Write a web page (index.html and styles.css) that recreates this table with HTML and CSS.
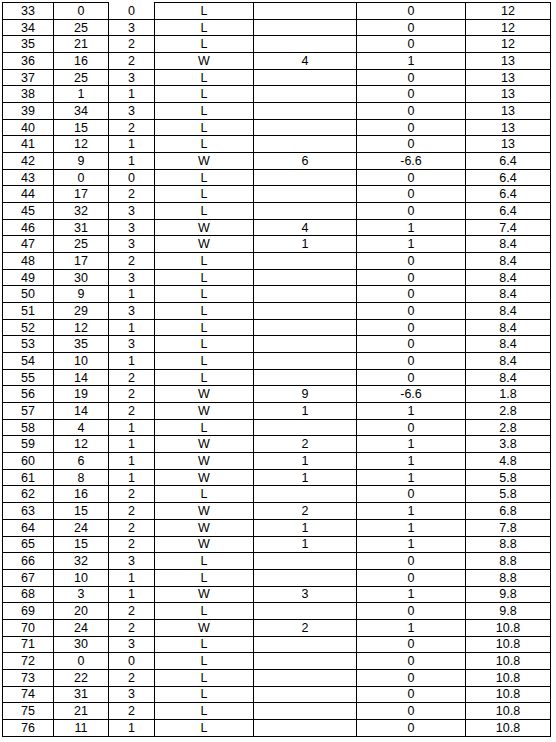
FILE: index.html
```html
<!DOCTYPE html>
<html>
<head>
<meta charset="utf-8">
<link rel="stylesheet" href="styles.css">
</head>
<body>
<table class="grid">
<colgroup>
<col class="c1"><col class="c2"><col class="c3"><col class="c4"><col class="c5"><col class="c6"><col class="c7">
</colgroup>
<tbody>
<tr class="first"><td>33</td><td>0</td><td class="open">0</td><td>L</td><td></td><td>0</td><td>12</td></tr>
<tr><td>34</td><td>25</td><td>3</td><td>L</td><td></td><td>0</td><td>12</td></tr>
<tr><td>35</td><td>21</td><td>2</td><td>L</td><td></td><td>0</td><td>12</td></tr>
<tr><td>36</td><td>16</td><td>2</td><td>W</td><td>4</td><td>1</td><td>13</td></tr>
<tr><td>37</td><td>25</td><td>3</td><td>L</td><td></td><td>0</td><td>13</td></tr>
<tr><td>38</td><td>1</td><td>1</td><td>L</td><td></td><td>0</td><td>13</td></tr>
<tr><td>39</td><td>34</td><td>3</td><td>L</td><td></td><td>0</td><td>13</td></tr>
<tr><td>40</td><td>15</td><td>2</td><td>L</td><td></td><td>0</td><td>13</td></tr>
<tr><td>41</td><td>12</td><td>1</td><td>L</td><td></td><td>0</td><td>13</td></tr>
<tr><td>42</td><td>9</td><td>1</td><td>W</td><td>6</td><td>-6.6</td><td>6.4</td></tr>
<tr><td>43</td><td>0</td><td>0</td><td>L</td><td></td><td>0</td><td>6.4</td></tr>
<tr><td>44</td><td>17</td><td>2</td><td>L</td><td></td><td>0</td><td>6.4</td></tr>
<tr><td>45</td><td>32</td><td>3</td><td>L</td><td></td><td>0</td><td>6.4</td></tr>
<tr><td>46</td><td>31</td><td>3</td><td>W</td><td>4</td><td>1</td><td>7.4</td></tr>
<tr><td>47</td><td>25</td><td>3</td><td>W</td><td>1</td><td>1</td><td>8.4</td></tr>
<tr><td>48</td><td>17</td><td>2</td><td>L</td><td></td><td>0</td><td>8.4</td></tr>
<tr><td>49</td><td>30</td><td>3</td><td>L</td><td></td><td>0</td><td>8.4</td></tr>
<tr><td>50</td><td>9</td><td>1</td><td>L</td><td></td><td>0</td><td>8.4</td></tr>
<tr><td>51</td><td>29</td><td>3</td><td>L</td><td></td><td>0</td><td>8.4</td></tr>
<tr><td>52</td><td>12</td><td>1</td><td>L</td><td></td><td>0</td><td>8.4</td></tr>
<tr><td>53</td><td>35</td><td>3</td><td>L</td><td></td><td>0</td><td>8.4</td></tr>
<tr><td>54</td><td>10</td><td>1</td><td>L</td><td></td><td>0</td><td>8.4</td></tr>
<tr><td>55</td><td>14</td><td>2</td><td>L</td><td></td><td>0</td><td>8.4</td></tr>
<tr><td>56</td><td>19</td><td>2</td><td>W</td><td>9</td><td>-6.6</td><td>1.8</td></tr>
<tr><td>57</td><td>14</td><td>2</td><td>W</td><td>1</td><td>1</td><td>2.8</td></tr>
<tr><td>58</td><td>4</td><td>1</td><td>L</td><td></td><td>0</td><td>2.8</td></tr>
<tr><td>59</td><td>12</td><td>1</td><td>W</td><td>2</td><td>1</td><td>3.8</td></tr>
<tr><td>60</td><td>6</td><td>1</td><td>W</td><td>1</td><td>1</td><td>4.8</td></tr>
<tr><td>61</td><td>8</td><td>1</td><td>W</td><td>1</td><td>1</td><td>5.8</td></tr>
<tr><td>62</td><td>16</td><td>2</td><td>L</td><td></td><td>0</td><td>5.8</td></tr>
<tr><td>63</td><td>15</td><td>2</td><td>W</td><td>2</td><td>1</td><td>6.8</td></tr>
<tr><td>64</td><td>24</td><td>2</td><td>W</td><td>1</td><td>1</td><td>7.8</td></tr>
<tr><td>65</td><td>15</td><td>2</td><td>W</td><td>1</td><td>1</td><td>8.8</td></tr>
<tr><td>66</td><td>32</td><td>3</td><td>L</td><td></td><td>0</td><td>8.8</td></tr>
<tr><td>67</td><td>10</td><td>1</td><td>L</td><td></td><td>0</td><td>8.8</td></tr>
<tr><td>68</td><td>3</td><td>1</td><td>W</td><td>3</td><td>1</td><td>9.8</td></tr>
<tr><td>69</td><td>20</td><td>2</td><td>L</td><td></td><td>0</td><td>9.8</td></tr>
<tr><td>70</td><td>24</td><td>2</td><td>W</td><td>2</td><td>1</td><td>10.8</td></tr>
<tr><td>71</td><td>30</td><td>3</td><td>L</td><td></td><td>0</td><td>10.8</td></tr>
<tr><td>72</td><td>0</td><td>0</td><td>L</td><td></td><td>0</td><td>10.8</td></tr>
<tr><td>73</td><td>22</td><td>2</td><td>L</td><td></td><td>0</td><td>10.8</td></tr>
<tr><td>74</td><td>31</td><td>3</td><td>L</td><td></td><td>0</td><td>10.8</td></tr>
<tr><td>75</td><td>21</td><td>2</td><td>L</td><td></td><td>0</td><td>10.8</td></tr>
<tr><td>76</td><td>11</td><td>1</td><td>L</td><td></td><td>0</td><td>10.8</td></tr>
</tbody>
</table>
</body>
</html>
```
FILE: styles.css
```css
html, body {
  margin: 0;
  padding: 0;
  background: #ffffff;
}

body {
  padding: 2px 0 0 2px;
}

.grid {
  border-collapse: collapse;
  table-layout: fixed;
  width: 549px;
  font-family: "Liberation Sans", Arial, sans-serif;
  font-size: 12.5px;
  color: #000000;
}

.c1 { width: 51px; }
.c2 { width: 55px; }
.c3 { width: 46px; }
.c4 { width: 99px; }
.c5 { width: 103px; }
.c6 { width: 109px; }
.c7 { width: 85px; }

.grid td {
  border: 1px solid #000000;
  padding: 0;
  height: 15.68px;
  line-height: 12px;
  text-align: center;
  vertical-align: middle;
}

.grid tr.first td.open {
  border-top: none;
}
```
